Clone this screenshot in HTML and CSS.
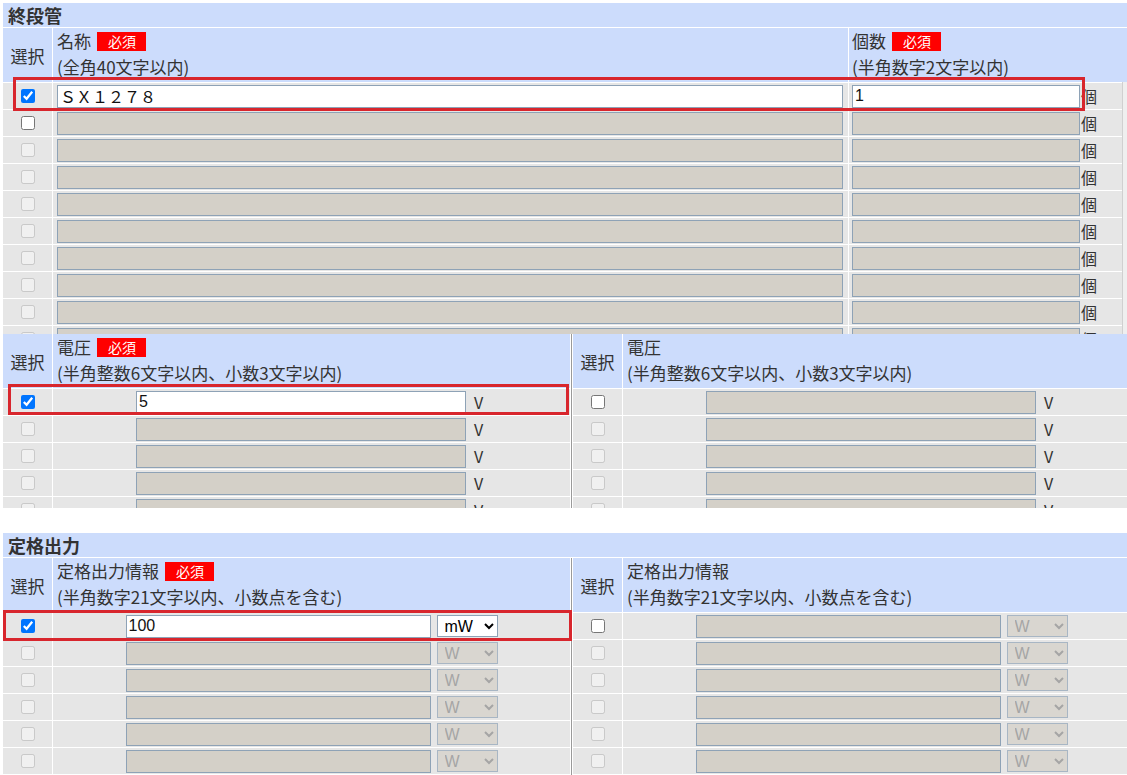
FILE: index.html
```html
<!DOCTYPE html>
<html lang="ja">
<head>
<meta charset="utf-8">
<title>終段管</title>
<link rel="stylesheet" href="styles.css">
</head>
<body>
<div class="page">
  <section class="group">
    <div class="group-title">終段管</div>
    <div class="scroll scroll-main">
      <table class="grid grid-main">
        <colgroup><col class="col-sel"><col class="col-name"><col class="col-count"></colgroup>
        <thead>
          <tr>
            <th class="th-sel">選択</th>
            <th class="th-lbl"><div class="lbl-line">名称<span class="req">必須</span></div><div class="lbl-line">(全角40文字以内)</div></th>
            <th class="th-lbl th-count"><div class="lbl-line">個数<span class="req">必須</span></div><div class="lbl-line">(半角数字2文字以内)</div></th>
          </tr>
        </thead>
        <tbody>
          <tr><td><div class="cell cell-chk"><input class="chk" type="checkbox" checked></div></td><td><div class="cell cell-name"><input class="txt txt-name" type="text" value="ＳＸ１２７８"></div></td><td><div class="cell cell-count"><input class="txt txt-count" type="text" value="1"><span class="unit">個</span></div></td></tr>
          <tr><td><div class="cell cell-chk"><input class="chk" type="checkbox"></div></td><td><div class="cell cell-name"><input class="txt txt-name" type="text" disabled></div></td><td><div class="cell cell-count"><input class="txt txt-count" type="text" disabled><span class="unit">個</span></div></td></tr>
          <tr><td><div class="cell cell-chk"><input class="chk" type="checkbox" disabled></div></td><td><div class="cell cell-name"><input class="txt txt-name" type="text" disabled></div></td><td><div class="cell cell-count"><input class="txt txt-count" type="text" disabled><span class="unit">個</span></div></td></tr>
          <tr><td><div class="cell cell-chk"><input class="chk" type="checkbox" disabled></div></td><td><div class="cell cell-name"><input class="txt txt-name" type="text" disabled></div></td><td><div class="cell cell-count"><input class="txt txt-count" type="text" disabled><span class="unit">個</span></div></td></tr>
          <tr><td><div class="cell cell-chk"><input class="chk" type="checkbox" disabled></div></td><td><div class="cell cell-name"><input class="txt txt-name" type="text" disabled></div></td><td><div class="cell cell-count"><input class="txt txt-count" type="text" disabled><span class="unit">個</span></div></td></tr>
          <tr><td><div class="cell cell-chk"><input class="chk" type="checkbox" disabled></div></td><td><div class="cell cell-name"><input class="txt txt-name" type="text" disabled></div></td><td><div class="cell cell-count"><input class="txt txt-count" type="text" disabled><span class="unit">個</span></div></td></tr>
          <tr><td><div class="cell cell-chk"><input class="chk" type="checkbox" disabled></div></td><td><div class="cell cell-name"><input class="txt txt-name" type="text" disabled></div></td><td><div class="cell cell-count"><input class="txt txt-count" type="text" disabled><span class="unit">個</span></div></td></tr>
          <tr><td><div class="cell cell-chk"><input class="chk" type="checkbox" disabled></div></td><td><div class="cell cell-name"><input class="txt txt-name" type="text" disabled></div></td><td><div class="cell cell-count"><input class="txt txt-count" type="text" disabled><span class="unit">個</span></div></td></tr>
          <tr><td><div class="cell cell-chk"><input class="chk" type="checkbox" disabled></div></td><td><div class="cell cell-name"><input class="txt txt-name" type="text" disabled></div></td><td><div class="cell cell-count"><input class="txt txt-count" type="text" disabled><span class="unit">個</span></div></td></tr>
          <tr><td><div class="cell cell-chk"><input class="chk" type="checkbox" disabled></div></td><td><div class="cell cell-name"><input class="txt txt-name" type="text" disabled></div></td><td><div class="cell cell-count"><input class="txt txt-count" type="text" disabled><span class="unit">個</span></div></td></tr>
          <tr><td><div class="cell cell-chk"><input class="chk" type="checkbox" disabled></div></td><td><div class="cell cell-name"><input class="txt txt-name" type="text" disabled></div></td><td><div class="cell cell-count"><input class="txt txt-count" type="text" disabled><span class="unit">個</span></div></td></tr>
        </tbody>
      </table>
    </div>

    <div class="split split-volt">
      <div class="panel">
        <table class="grid grid-half">
          <colgroup><col class="col-sel"><col class="col-half"></colgroup>
          <thead>
            <tr>
              <th class="th-sel">選択</th>
              <th class="th-lbl"><div class="lbl-line">電圧<span class="req">必須</span></div><div class="lbl-line">(半角整数6文字以内、小数3文字以内)</div></th>
            </tr>
          </thead>
          <tbody>
            <tr><td><div class="cell cell-chk"><input class="chk" type="checkbox" checked></div></td><td><div class="cell cell-mid"><input class="txt txt-volt" type="text" value="5"><span class="unit unit-v">V</span></div></td></tr>
            <tr><td><div class="cell cell-chk"><input class="chk" type="checkbox" disabled></div></td><td><div class="cell cell-mid"><input class="txt txt-volt" type="text" disabled><span class="unit unit-v">V</span></div></td></tr>
            <tr><td><div class="cell cell-chk"><input class="chk" type="checkbox" disabled></div></td><td><div class="cell cell-mid"><input class="txt txt-volt" type="text" disabled><span class="unit unit-v">V</span></div></td></tr>
            <tr><td><div class="cell cell-chk"><input class="chk" type="checkbox" disabled></div></td><td><div class="cell cell-mid"><input class="txt txt-volt" type="text" disabled><span class="unit unit-v">V</span></div></td></tr>
            <tr><td><div class="cell cell-chk"><input class="chk" type="checkbox" disabled></div></td><td><div class="cell cell-mid"><input class="txt txt-volt" type="text" disabled><span class="unit unit-v">V</span></div></td></tr>
            <tr><td><div class="cell cell-chk"><input class="chk" type="checkbox" disabled></div></td><td><div class="cell cell-mid"><input class="txt txt-volt" type="text" disabled><span class="unit unit-v">V</span></div></td></tr>
          </tbody>
        </table>
      </div>
      <div class="divider"></div>
      <div class="panel">
        <table class="grid grid-half">
          <colgroup><col class="col-sel"><col class="col-half"></colgroup>
          <thead>
            <tr>
              <th class="th-sel">選択</th>
              <th class="th-lbl"><div class="lbl-line">電圧</div><div class="lbl-line">(半角整数6文字以内、小数3文字以内)</div></th>
            </tr>
          </thead>
          <tbody>
            <tr><td><div class="cell cell-chk"><input class="chk" type="checkbox"></div></td><td><div class="cell cell-mid"><input class="txt txt-volt" type="text" disabled><span class="unit unit-v">V</span></div></td></tr>
            <tr><td><div class="cell cell-chk"><input class="chk" type="checkbox" disabled></div></td><td><div class="cell cell-mid"><input class="txt txt-volt" type="text" disabled><span class="unit unit-v">V</span></div></td></tr>
            <tr><td><div class="cell cell-chk"><input class="chk" type="checkbox" disabled></div></td><td><div class="cell cell-mid"><input class="txt txt-volt" type="text" disabled><span class="unit unit-v">V</span></div></td></tr>
            <tr><td><div class="cell cell-chk"><input class="chk" type="checkbox" disabled></div></td><td><div class="cell cell-mid"><input class="txt txt-volt" type="text" disabled><span class="unit unit-v">V</span></div></td></tr>
            <tr><td><div class="cell cell-chk"><input class="chk" type="checkbox" disabled></div></td><td><div class="cell cell-mid"><input class="txt txt-volt" type="text" disabled><span class="unit unit-v">V</span></div></td></tr>
            <tr><td><div class="cell cell-chk"><input class="chk" type="checkbox" disabled></div></td><td><div class="cell cell-mid"><input class="txt txt-volt" type="text" disabled><span class="unit unit-v">V</span></div></td></tr>
          </tbody>
        </table>
      </div>
    </div>
  </section>

  <section class="group group-rated">
    <div class="group-title">定格出力</div>
    <div class="split split-rated">
      <div class="panel">
        <table class="grid grid-half">
          <colgroup><col class="col-sel"><col class="col-half"></colgroup>
          <thead>
            <tr>
              <th class="th-sel">選択</th>
              <th class="th-lbl"><div class="lbl-line">定格出力情報<span class="req">必須</span></div><div class="lbl-line">(半角数字21文字以内、小数点を含む)</div></th>
            </tr>
          </thead>
          <tbody>
            <tr><td><div class="cell cell-chk"><input class="chk" type="checkbox" checked></div></td><td><div class="cell cell-mid"><input class="txt txt-rated" type="text" value="100"><select class="sel"><option>mW</option><option>W</option></select></div></td></tr>
            <tr><td><div class="cell cell-chk"><input class="chk" type="checkbox" disabled></div></td><td><div class="cell cell-mid"><input class="txt txt-rated" type="text" disabled><select class="sel" disabled><option>W</option></select></div></td></tr>
            <tr><td><div class="cell cell-chk"><input class="chk" type="checkbox" disabled></div></td><td><div class="cell cell-mid"><input class="txt txt-rated" type="text" disabled><select class="sel" disabled><option>W</option></select></div></td></tr>
            <tr><td><div class="cell cell-chk"><input class="chk" type="checkbox" disabled></div></td><td><div class="cell cell-mid"><input class="txt txt-rated" type="text" disabled><select class="sel" disabled><option>W</option></select></div></td></tr>
            <tr><td><div class="cell cell-chk"><input class="chk" type="checkbox" disabled></div></td><td><div class="cell cell-mid"><input class="txt txt-rated" type="text" disabled><select class="sel" disabled><option>W</option></select></div></td></tr>
            <tr><td><div class="cell cell-chk"><input class="chk" type="checkbox" disabled></div></td><td><div class="cell cell-mid"><input class="txt txt-rated" type="text" disabled><select class="sel" disabled><option>W</option></select></div></td></tr>
          </tbody>
        </table>
      </div>
      <div class="divider"></div>
      <div class="panel">
        <table class="grid grid-half">
          <colgroup><col class="col-sel"><col class="col-half"></colgroup>
          <thead>
            <tr>
              <th class="th-sel">選択</th>
              <th class="th-lbl"><div class="lbl-line">定格出力情報</div><div class="lbl-line">(半角数字21文字以内、小数点を含む)</div></th>
            </tr>
          </thead>
          <tbody>
            <tr><td><div class="cell cell-chk"><input class="chk" type="checkbox"></div></td><td><div class="cell cell-mid"><input class="txt txt-rated" type="text" disabled><select class="sel" disabled><option>W</option></select></div></td></tr>
            <tr><td><div class="cell cell-chk"><input class="chk" type="checkbox" disabled></div></td><td><div class="cell cell-mid"><input class="txt txt-rated" type="text" disabled><select class="sel" disabled><option>W</option></select></div></td></tr>
            <tr><td><div class="cell cell-chk"><input class="chk" type="checkbox" disabled></div></td><td><div class="cell cell-mid"><input class="txt txt-rated" type="text" disabled><select class="sel" disabled><option>W</option></select></div></td></tr>
            <tr><td><div class="cell cell-chk"><input class="chk" type="checkbox" disabled></div></td><td><div class="cell cell-mid"><input class="txt txt-rated" type="text" disabled><select class="sel" disabled><option>W</option></select></div></td></tr>
            <tr><td><div class="cell cell-chk"><input class="chk" type="checkbox" disabled></div></td><td><div class="cell cell-mid"><input class="txt txt-rated" type="text" disabled><select class="sel" disabled><option>W</option></select></div></td></tr>
            <tr><td><div class="cell cell-chk"><input class="chk" type="checkbox" disabled></div></td><td><div class="cell cell-mid"><input class="txt txt-rated" type="text" disabled><select class="sel" disabled><option>W</option></select></div></td></tr>
          </tbody>
        </table>
      </div>
    </div>
  </section>

  <div class="mark mark-name"></div>
  <div class="mark mark-volt"></div>
  <div class="mark mark-rated"></div>
</div>
</body>
</html>
```

FILE: styles.css
```css
html, body {
  margin: 0;
  padding: 0;
  overflow: hidden;
  background: #fff;
}

body {
  font-family: "Noto Sans CJK JP", "Liberation Sans", sans-serif;
  font-size: 16px;
  color: #333;
}

.page {
  position: relative;
  padding: 3px 0 0 3px;
}

.group-title {
  height: 24px;
  line-height: 24px;
  padding-left: 5px;
  background: #ccdcfc;
  border-bottom: 1px solid #fff;
  font-size: 18px;
  font-weight: bold;
  color: #333;
}

.group-rated {
  margin-top: 25px;
}

.scroll-main {
  position: relative;
  height: 306px;
  overflow: hidden;
}

.scroll-main::after {
  content: "";
  position: absolute;
  left: 1119px;
  top: 54px;
  bottom: 0;
  width: 12px;
  background: #efefef;
  border-left: 1px solid #d0d0d0;
}

/* grid tables */
.grid {
  border-collapse: separate;
  border-spacing: 0;
  table-layout: fixed;
}

.grid-main { width: 1135px; }
.grid-half { width: 567px; }

.col-sel { width: 49px; }
.col-name { width: 796px; }
.col-count { width: 290px; }
.col-half { width: 518px; }

.grid th,
.grid td {
  padding: 0;
  box-sizing: border-box;
  border-bottom: 1px solid #fff;
}

.grid th + th,
.grid td + td {
  border-left: 1px solid #fff;
}

.grid th {
  height: 54px;
  background: #ccdcfc;
  font-weight: normal;
  font-size: 17px;
  color: #333;
  vertical-align: middle;
}

.th-sel {
  text-align: center;
}

.th-lbl {
  text-align: left;
  padding-left: 4px !important;
  padding-bottom: 2px !important;
  white-space: nowrap;
}

.th-count {
  padding-left: 3px !important;
}

.lbl-line {
  height: 26px;
  line-height: 26px;
}

.req {
  display: inline-block;
  margin-left: 6px;
  padding: 0 10px 0 11px;
  height: 19px;
  line-height: 19px;
  background: #f00;
  color: #fff;
  font-size: 14px;
  vertical-align: 1px;
}

.grid td {
  height: 27px;
  background: #e6e6e6;
}

.cell {
  height: 26px;
  display: flex;
  align-items: center;
  white-space: nowrap;
}

.cell-chk { justify-content: center; }
.cell-name { padding-left: 4px; }
.cell-count { padding-left: 3px; }
.cell-mid { justify-content: center; }

.chk {
  margin: 0;
  width: 14px;
  height: 14px;
}

.txt {
  box-sizing: border-box;
  height: 23px;
  margin: 0;
  padding: 0 2px;
  border: 1px solid #8ea2b6;
  border-radius: 0;
  background: #fff;
  color: #111;
  font-family: "Liberation Sans", "Noto Sans CJK JP", sans-serif;
  font-size: 16px;
  outline: none;
}

.txt:disabled {
  background: #d4d0c8;
}

.txt-name { width: 786px; }
.txt-count { width: 228px; }
.txt-volt { width: 330px; }
.txt-rated { width: 305px; }

.unit {
  margin-left: 1px;
  line-height: 20px;
  color: #333;
}

.unit-v {
  margin-left: 8px;
  margin-right: 4px;
}

.sel {
  box-sizing: border-box;
  width: 61px;
  height: 22px;
  margin: 0 0 0 6px;
  padding: 0 0 0 3px;
  border: 1px solid #8ea2b6;
  border-radius: 0;
  background-color: #fff;
  color: #000;
  font-family: "Liberation Sans", sans-serif;
  font-size: 16px;
}

.sel:disabled {
  background-color: #d4d0c8;
  color: #8a8a8a;
  opacity: 0.7;
}

/* two panels side by side */
.split {
  display: flex;
}

.split-volt {
  height: 174px;
  overflow: hidden;
}

.panel {
  flex: 0 0 auto;
}

.divider {
  flex: 0 0 1px;
  margin: 0 1px;
  background: #9a9a9a;
}

/* red annotation frames */
.mark {
  position: absolute;
  box-sizing: border-box;
  border: 3px solid #d8262d;
  pointer-events: none;
}

.mark-name { left: 13px; top: 77px; width: 1072px; height: 34px; }
.mark-volt { left: 8px; top: 384px; width: 561px; height: 31px; }
.mark-rated { left: 3px; top: 610px; width: 569px; height: 31px; }
```
